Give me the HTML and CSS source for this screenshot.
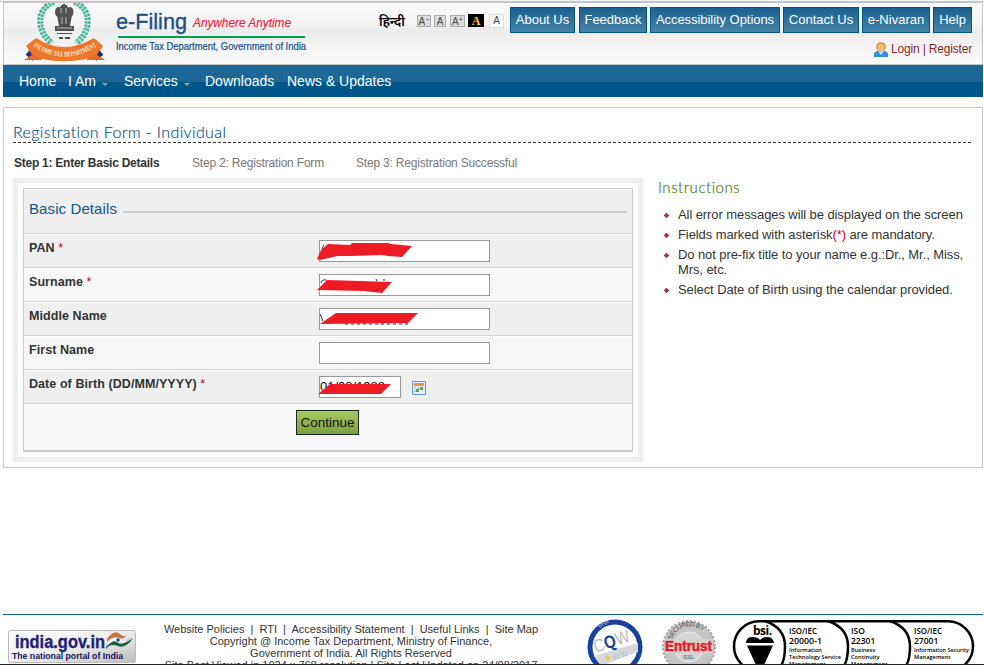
FILE: index.html
```html
<!DOCTYPE html>
<html lang="en">
<head>
<meta charset="utf-8">
<title>e-Filing - Registration Form</title>
<link rel="stylesheet" href="styles.css">
</head>
<body>
<div class="page">
  <header class="header">
    <svg class="logo" width="304" height="61" viewBox="0 0 304 61">
      <g transform="translate(10 0)">
        <path d="M40-1C22 5 22 29 38 40M60-1C78 5 78 29 62 40" fill="none" stroke="#45b597" stroke-width="6" stroke-dasharray="2.600 1"/>
        <path d="M40-1C22 5 22 29 38 40M60-1C78 5 78 29 62 40" fill="none" stroke="#a5dfcd" stroke-width="1"/>
        <g fill="#505050">
          <ellipse cx="50" cy="7" rx="4.500" ry="6"/><ellipse cx="44.500" cy="9" rx="3.500" ry="5"/><ellipse cx="56" cy="9" rx="3.500" ry="5"/>
          <path d="M43 12h15l-2 11h-11zM41 23h19v5h-19zM43 30h15v1h-15zM45 34h4v2h-4zm6 0h5v2h-5z"/>
        </g>
        <path d="M47 5v5m5-5v5m-4 4v7m4-7v7m-9 4h15" stroke="#bbb" fill="none"/>
      </g>
      <path d="M24 49l7 6M97 49l-7 6" stroke="#1b2b88" stroke-width="7"/>
      <path d="M20 57l8-5-5-8 14 5 1 8zM101 57l-8-5 5-8-14 5-1 8z" fill="#e76c23"/>
      <path d="M32 35Q60 53 90 35l9 8-8 9Q82 58 60 58T30 52L22 43z" fill="#ef772c"/>
      <path id="ribbon" d="M29 43Q60 64 93 43" fill="none"/>
      <text class="ribbon-text"><textPath href="#ribbon" textLength="68" lengthAdjust="spacingAndGlyphs">INCOME TAX DEPARTMENT</textPath></text>
      <text class="brand" x="112" y="26" textLength="71" lengthAdjust="spacingAndGlyphs">e-Filing</text>
      <text class="slogan" x="189" y="24" textLength="98" lengthAdjust="spacingAndGlyphs">Anywhere Anytime</text>
      <path d="M114 34h187" stroke="#00a150" stroke-width="2"/>
      <text class="dept" x="112" y="47" textLength="190" lengthAdjust="spacingAndGlyphs">Income Tax Department, Government of India</text>
    </svg>
    <div class="tools">
      <div class="tool-row">
        <span class="hindi" lang="hi">हिन्दी</span>
        <div class="sizes">
          <span class="size">A<sup>−</sup></span><span class="size plain">A</span><span class="size plus">A<sup>+</sup></span><span class="size yellow">A</span><span class="size white">A</span>
        </div>
        <nav class="buttons">
          <a class="btn b1">About Us</a><a class="btn b2">Feedback</a><a class="btn b3">Accessibility Options</a><a class="btn b4">Contact Us</a><a class="btn b5">e-Nivaran</a><a class="btn b6">Help</a>
        </nav>
      </div>
      <div class="login">
        <svg width="14" height="15" viewBox="0 0 14 15"><path d="M0 15v-4l3-2h8l3 2v4z" fill="#398ddb"/><path d="M4 9l3 4 3-4z" fill="#cfe6f7"/><circle cx="7" cy="5" r="4.800" fill="#e48b37"/><ellipse cx="7" cy="6" rx="3.300" ry="4" fill="#f5be83"/></svg>
        <span>Login | Register</span>
      </div>
    </div>
  </header>
  <nav class="menu">
    <a class="m-home">Home</a><a class="m-iam">I Am <i></i></a><a class="m-serv">Services <i></i></a><a class="m-down">Downloads</a><a>News &amp; Updates</a>
  </nav>
  <main class="main">
    <h1>Registration Form - Individual</h1>
    <div class="steps"><b>Step 1: Enter Basic Details</b><span>Step 2: Registration Form</span><span>Step 3: Registration Successful</span></div>
    <div class="columns">
      <section class="panel">
        <form class="form">
          <div class="legend"><span>Basic Details</span><hr></div>
          <div class="row"><label>PAN <em>*</em></label><div class="field"><div class="input"></div>
            <svg class="mark" width="100" height="22" viewBox="0 0 100 22"><path d="M5 9q1-3 2-4" stroke="#222" fill="none"/><path d="M0 19L4 10 11 4 33 5 35 3 71 3 74 4 95 6 85 17 71 16 65 15 34 16 20 16 16 17 3 20z" fill="#ed1c24"/></svg></div></div>
          <div class="row odd"><label>Surname <em>*</em></label><div class="field"><div class="input"></div>
            <svg class="mark" width="100" height="22" viewBox="0 0 100 22"><path d="M4 9q1-4 5-3M59 5l1 2m7-2v2" stroke="#222" fill="none"/><path d="M0 16L10 6 75 8 65 19 47 17z" fill="#ed1c24"/></svg></div></div>
          <div class="row"><label>Middle Name</label><div class="field"><div class="input"></div>
            <svg class="mark" width="104" height="22" viewBox="0 0 104 22"><path d="M3 6l3 7" stroke="#222" fill="none"/><path d="M28 16h64" stroke="#222" stroke-dasharray="3 3"/><path d="M3 16L19 5 101 5 91 15z" fill="#ed1c24"/></svg></div></div>
          <div class="row odd"><label>First Name</label><div class="field"><div class="input"></div></div></div>
          <div class="row"><label>Date of Birth (DD/MM/YYYY) <em>*</em></label><div class="field"><div class="input date">01/08/1988</div>
            <svg class="cal" width="14" height="14" viewBox="0 0 14 14"><path d="M.5.500h13v13H.5z" fill="#e6f0fc" stroke="#6695cd"/><path d="M2 2h10v3H2z" fill="#f28c46"/><path d="M2 6h2v2H2zm3 0h2v2H5zm3 0h2v2H8zM2 9h2v2H2z" fill="#bccbe0"/><path d="M4 8h3v3H4zm4-2h3v3H8z" fill="#54a451"/></svg>
            <svg class="mark" width="100" height="22" viewBox="0 0 100 22"><path d="M1 18L13 8 74 8 64 18z" fill="#ed1c24"/></svg></div></div>
          <div class="actions"><button type="button">Continue</button></div>
        </form>
      </section>
      <aside class="help">
        <h2>Instructions</h2>
        <ul>
          <li>All error messages will be displayed on the screen</li>
          <li>Fields marked with asterisk<em>(*)</em> are mandatory.</li>
          <li>Do not pre-fix title to your name e.g.:Dr., Mr., Miss,<br>Mrs, etc.</li>
          <li>Select Date of Birth using the calendar provided.</li>
        </ul>
      </aside>
    </div>
  </main>
  <footer class="footer">
    <svg class="portal" width="128" height="34" viewBox="0 0 128 34">
      <defs><linearGradient id="silver" x2="1" y2="1"><stop stop-color="#fff"/><stop offset=".5" stop-color="#eee"/><stop offset="1" stop-color="#bbb"/></linearGradient></defs>
      <rect x=".5" y=".5" width="127" height="32" rx="2" fill="url(#silver)" stroke="#bbb"/>
      <text class="portal-name" x="7" y="18" textLength="90" lengthAdjust="spacingAndGlyphs">india.gov.in</text>
      <text class="portal-sub" x="4" y="29" textLength="111" lengthAdjust="spacingAndGlyphs">The national portal of India</text>
      <path d="M99 9Q106-1 112 4t7-1q-1 7-8 5t-12 4z" fill="#c87543"/><path d="M99 12q8-7 13-3t10-1l-5 5-7-1-12 4z" fill="#fff" stroke="#aaa" stroke-width=".4"/><path d="M98 17q8-9 12-4 4 3 15-5-7 11-15 8t-12 3z" fill="#16613c"/><circle cx="110" cy="10" r="1.800" fill="#28489b"/>
    </svg>
    <div class="copy">
      <p class="links">Website Policies &nbsp;|&nbsp; RTI &nbsp;|&nbsp; Accessibility Statement &nbsp;|&nbsp; Useful Links &nbsp;|&nbsp; Site Map</p>
      <p>Copyright @ Income Tax Department, Ministry of Finance,</p>
      <p>Government of India. All Rights Reserved</p>
      <p class="last">Site Best Viewed in 1024 x 768 resolution | Site Last Updated on 24/08/2017</p>
    </div>
    <svg class="badges" width="390" height="46" viewBox="585 619 390 46">
      <circle cx="615" cy="647" r="25" fill="#fff" stroke="#16429b" stroke-width="5"/>
      <path d="M594 656L638 643v9l-37 14z" fill="#d5d7dc"/>
      <path id="ring" d="M598 630A24 24 0 0 1 635 630" fill="none"/><text class="ring-text"><textPath href="#ring" startOffset="3">STQC</textPath></text>
      <text class="cqw" transform="rotate(-19 596 653)" x="596" y="653" textLength="37" lengthAdjust="spacingAndGlyphs">C<tspan class="q">Q</tspan>W</text>
      <text class="stars" x="605" y="662" transform="rotate(-14 605 662)"><tspan class="gold">★</tspan>☆☆</text>
      <circle cx="689" cy="647" r="25.500" fill="#aaa" stroke="#aaa" stroke-width="3" stroke-dasharray="2.500 1.500"/>
      <circle cx="689" cy="647" r="25" fill="#c5c5c5"/><circle cx="689" cy="647" r="15" fill="#d5d5d5" stroke="#eee"/>
      <path id="secured" d="M672 640A18 18 0 0 1 707 640" fill="none"/><text class="secured"><textPath href="#secured" textLength="38">SECURED BY</textPath></text>
      <rect x="665" y="639" width="48" height="14" fill="#d3d3d3"/><text class="entrust" x="665" y="651" textLength="47" lengthAdjust="spacingAndGlyphs">Entrust</text><text class="ssl" x="683" y="659">SSL</text>
      <g fill="none" stroke="#000" stroke-width="2.500"><rect x="734" y="621.200" width="239" height="50" rx="25"/><path d="M765 621q20 7 20 25t-7 23M828 621q20 7 20 25t-7 23M890 621q20 7 20 25t-7 23"/></g>
      <text class="bsi" x="753" y="635">bsi.</text><path d="M746 643q0-6 6-6 6 0 8 3 2-3 8-3 5 0 6 6zM747 645.500h26l-9 19.500h-8z"/>
      <g class="iso"><text x="789" y="634" textLength="28" lengthAdjust="spacingAndGlyphs">ISO/IEC</text><text x="789" y="643.500" textLength="33" lengthAdjust="spacingAndGlyphs">20000-1</text><text x="851" y="634">ISO</text><text x="851" y="643.500">22301</text><text x="914" y="634" textLength="28" lengthAdjust="spacingAndGlyphs">ISO/IEC</text><text x="914" y="643.500">27001</text></g>
      <g class="iso-sub"><text x="789" y="651.500">Information</text><text x="789" y="659" textLength="52" lengthAdjust="spacingAndGlyphs">Technology Service</text><text x="789" y="666">Management</text><text x="851" y="651.500">Business</text><text x="851" y="659">Continuity</text><text x="851" y="666">Management</text><text x="914" y="651.500" textLength="55" lengthAdjust="spacingAndGlyphs">Information Security</text><text x="914" y="659">Management</text></g>
    </svg>
  </footer>
</div>
</body>
</html>
```
FILE: styles.css
```css
* { box-sizing: border-box; }
body { margin: 0; background: #fff; font: 13px/15px "Liberation Sans", Arial, sans-serif; color: #333; overflow: hidden; }
.page { height: 665px; padding: 2px 1px 0 3px; border-bottom: 1px solid #222; overflow: hidden; display: flex; flex-direction: column; background: linear-gradient(#f2f2f2 1px, #c7c7c7 1px, #c7c7c7 2px, transparent 2px); }
.page > * { flex-shrink: 0; }
.header { height: 63px; border: 1px solid #c7c7c7; border-top: 1px solid #c5c5c5; display: flex; justify-content: space-between; background: linear-gradient(#fafafa, #f3f3f3 24px, #ececec 25px, #f0f0f0 36px, #fbfbfb); }
.logo { width: 304px; height: 61px; overflow: hidden; flex-shrink: 0; }
.brand { font-size: 22px; fill: #174f86; stroke: #174f86; stroke-width: .35px; }
.slogan { font-size: 12.500px; font-style: italic; fill: #ed1c32; stroke: #ed1c32; stroke-width: .15px; }
.dept { font-size: 10px; fill: #174f86; stroke: #174f86; stroke-width: .2px; }
.ribbon-text { font: bold 7px "Liberation Serif", serif; fill: #fff0df; }
.tools { padding: 4px 10px 0 0; }
.tool-row { display: flex; align-items: flex-start; height: 26px; }
.hindi { font: 600 13px/24px "Noto Sans", "Noto Sans Devanagari", "Lohit Devanagari", FreeSans, sans-serif; width: 39px; color: #000; white-space: nowrap; padding: 2px 0 0 1px; }
.sizes { display: flex; width: 93px; padding-top: 8px; }
.size { width: 14px; height: 12px; margin-right: 3px; border: 1px solid #aaa; background: #ddd; font-size: 10px; line-height: 11px; text-align: center; white-space: nowrap; color: #444; }
.size sup { font-size: 7px; line-height: 0; vertical-align: 3px; }
.size.plain { width: 12px; margin-right: 4px; }
.size.plus { width: 15px; }
.size.yellow { width: 16px; height: 13px; margin-top: -1px; background: #000; color: #fc0; border-color: #000; font: bold 12px/12px "Liberation Serif", serif; margin-right: 5px; }
.size.white { background: #fff; margin: -1px 0 0; width: 15px; height: 14px; line-height: 12px; border-color: #ddd; }
.tool-row { justify-content: flex-end; }
.buttons { display: flex; gap: 3px; }
.btn { height: 26px; border: 1px solid #00568c; background: linear-gradient(#19608f, #4884a8); color: #fff; text-align: center; line-height: 24px; white-space: nowrap; }
.b1 { width: 65px; margin-right: 1px; } .b2 { width: 68px; } .b3 { width: 130px; letter-spacing: -.05px; } .b4 { width: 76px; } .b5 { width: 68px; } .b6 { width: 39px; }
.login { display: flex; justify-content: flex-end; margin-top: 9px; color: #8a2828; font-size: 12px; line-height: 15px; gap: 3px; letter-spacing: -.180px; }
.menu { height: 32px; display: flex; padding-left: 16px; background: linear-gradient(#1c6796 17px, #00568a 17px); color: #fff; font-size: 14px; line-height: 32px; letter-spacing: 0; }
.m-home { width: 49px; } .m-iam { width: 56px; } .m-serv { width: 81px; } .m-down { width: 82px; }
.menu i { display: inline-block; border: 3px solid transparent; border-top-color: #a9a09d; border-bottom: 0; margin-left: 2px; vertical-align: 0; }
.main { height: 361px; margin-top: 10px; border: 1px solid #ccc; padding: 14px 11px 0 9px; }
h1, h2 { font-family: Lato, sans-serif; font-weight: 300; margin: 0; }
h1 { height: 21px; border-bottom: 1px dashed #333; font-size: 16px; line-height: 20px; color: #004f82; letter-spacing: .380px; -webkit-text-stroke: .15px #004f82; }
.steps { display: flex; margin-top: 13px; padding-left: 1px; font-size: 12px; color: #777; height: 23px; white-space: nowrap; }
.steps b { width: 178px; color: #333; letter-spacing: -.250px; } .steps span { width: 164px; letter-spacing: -.190px; }
.columns { display: flex; }
.panel { width: 630px; flex-shrink: 0; height: 284px; margin-top: -1px; border: 5px solid #efefef; padding: 5px; }
.form { height: 264px; border: 1px solid #ccc; background: #f7f7f7; border-bottom-width: 2px; }
.legend { height: 45px; border-bottom: 1px solid #d5d5d5; border-top: 1px solid #fff; background: #efefef; display: flex; align-items: center; padding: 0 5px 6px; font-size: 15px; color: #0b598a; gap: 6px; letter-spacing: .1px; }
.legend span { white-space: nowrap; }
.legend hr { flex: 1; border: 0; height: 2px; background: #ccc; margin: 6px 0 0; }
.row { height: 34px; border-top: 1px solid #fff; border-bottom: 1px solid #d5d5d5; background: #efefef; display: flex; padding-left: 5px; }
.row.odd { background: #f7f7f7; }
.row label { width: 290px; padding-top: 6px; font-size: 12.500px; font-weight: bold; letter-spacing: .070px; }
em { color: #c00026; font-style: normal; font-weight: normal; }
.field { position: relative; display: flex; padding-top: 5px; }
.input { width: 171px; height: 22px; border: 1px solid #999; background: #fff; }
.input.date { width: 82px; color: #000; padding-left: 0; line-height: 19px; }
.mark { position: absolute; left: -2px; top: 5px; }
.cal { margin: 5px 0 0 11px; }
.actions { padding: 5px 0 0 272px; border-top: 1px solid #fff; }
button { display: block; width: 63px; height: 25px; padding: 0; border: 1px solid #222; background: linear-gradient(#a7ca62, #799d42); font: 13.500px "Liberation Sans", Arial, sans-serif; color: #111; white-space: nowrap; }
.help { margin-left: 15px; width: 315px; }
h2 { font-size: 15px; line-height: 17px; color: #427600; letter-spacing: .550px; -webkit-text-stroke: .15px #427600; }
ul { list-style: none; margin: 11px 0 0; padding: 0 0 0 20px; letter-spacing: -.085px; }
li { margin-bottom: 5px; white-space: nowrap; position: relative; }
li::before { content: ""; position: absolute; left: -13px; top: 7px; width: 3px; height: 3px; background: #a7324a; box-shadow: 0 0 0 .500px #a7324a; transform: rotate(45deg); }
.footer { margin-top: 146px; height: 52px; border-top: 1px solid #0b598a; display: flex; overflow: hidden; }
.columns { width: 970px; }
.panel { width: 630px; margin-right: 0; }
.portal { margin: 15px 0 0 5px; flex-shrink: 0; }
.portal-name { font-size: 18px; font-weight: bold; fill: #20207c; stroke: #20207c; stroke-width: .3px; }
.portal-sub { font-size: 9px; font-weight: bold; fill: #14145c; }
.copy { width: 430px; flex-shrink: 0; text-align: center; font-size: 11px; line-height: 12px; padding-top: 8px; white-space: nowrap; }
.copy p { margin: 0; }
.badges { margin: 4px 0 0 19px; flex-shrink: 0; }
.ring-text { font-size: 4px; fill: #fff; }
.cqw { font-size: 18px; fill: #b9bcc1; } .q { fill: #16429b; font-weight: bold; }
.stars { font-size: 9px; fill: #8ba7cd; } .gold { fill: #f4ce14; }
.secured { font-size: 6.500px; fill: #444; } .entrust { font-size: 14px; font-weight: bold; fill: #ef1821; stroke: #ef1821; stroke-width: .5px; } .ssl { font-size: 6px; fill: #555; }
.bsi { font: bold 12px "Open Sans", sans-serif; letter-spacing: -.5px; }
.iso { font: 600 8.500px "Open Sans", sans-serif; } .iso-sub { font: 600 5.700px "Open Sans", sans-serif; }
```
